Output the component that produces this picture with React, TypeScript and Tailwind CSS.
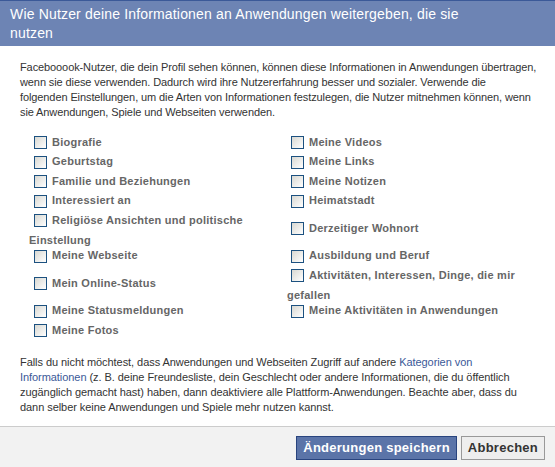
import React from "react";

type Item = { lines: string[] };

const LEFT_ROWS: (Item | null)[] = [
  { lines: ["Biografie"] },
  { lines: ["Geburtstag"] },
  { lines: ["Familie und Beziehungen"] },
  { lines: ["Interessiert an"] },
  { lines: ["Religiöse Ansichten und politische", "Einstellung"] },
  { lines: ["Meine Webseite"] },
  { lines: ["Mein Online-Status"] },
  { lines: ["Meine Statusmeldungen"] },
  { lines: ["Meine Fotos"] },
];

const RIGHT_ROWS: (Item | null)[] = [
  { lines: ["Meine Videos"] },
  { lines: ["Meine Links"] },
  { lines: ["Meine Notizen"] },
  { lines: ["Heimatstadt"] },
  { lines: ["Derzeitiger Wohnort"] },
  { lines: ["Ausbildung und Beruf"] },
  { lines: ["Aktivitäten, Interessen, Dinge, die mir", "gefallen"] },
  { lines: ["Meine Aktivitäten in Anwendungen"] },
  null,
];

const CheckBox = () => (
  <span className="mt-[2px] inline-block h-[13px] w-[13px] shrink-0 border border-[#1c5180] bg-gradient-to-br from-[#d8d8d2] to-white" />
);

const Option = ({ item, indent }: { item: Item | null; indent: string }) => {
  if (!item) return <div />;
  const [first, second] = item.lines;
  return (
    <div className="text-[11px] font-bold tracking-[0.25px] text-[#666]">
      <div className={`flex h-[19.5px] items-center whitespace-nowrap ${indent}`}>
        <CheckBox />
        <span className="ml-[5px] leading-[14px]">{first}</span>
      </div>
      {second && (
        <div className="h-[16px] whitespace-nowrap pt-[3px] leading-[14px]">
          {second}
        </div>
      )}
    </div>
  );
};

export default function App() {
  return (
    <div
      className="flex h-[467px] w-[555px] flex-col bg-white text-[#333]"
      style={{ fontFamily: '"Liberation Sans", Arial, sans-serif' }}
    >
      {/* Title bar */}
      <div className="h-[46px] border-t border-[#3b5998] bg-[#6d84b4] px-[10px] pt-[4px] text-[14px] leading-[19px] tracking-[0.17px] text-white">
        Wie Nutzer deine Informationen an Anwendungen weitergeben, die sie
        <br />
        nutzen
      </div>

      {/* Intro */}
      <p className="mt-[14px] px-[20px] text-[11px] leading-[15px] tracking-[-0.1px] whitespace-nowrap">
        Facebooook-Nutzer, die dein Profil sehen können, können diese Informationen in Anwendungen übertragen,
        <br />
        wenn sie diese verwenden. Dadurch wird ihre Nutzererfahrung besser und sozialer. Verwende die
        <br />
        folgenden Einstellungen, um die Arten von Informationen festzulegen, die Nutzer mitnehmen können, wenn
        <br />
        sie Anwendungen, Spiele und Webseiten verwenden.
      </p>

      {/* Options */}
      <div className="mt-[12px] grid grid-cols-[258px_1fr] items-center pl-[29px]">
        {LEFT_ROWS.map((left, i) => (
          <React.Fragment key={i}>
            <Option item={left} indent="pl-[5px]" />
            <Option item={RIGHT_ROWS[i]} indent="pl-[4px]" />
          </React.Fragment>
        ))}
      </div>

      {/* Note */}
      <p className="mt-[15px] px-[20px] text-[11px] leading-[15px] tracking-[-0.06px] whitespace-nowrap">
        Falls du nicht möchtest, dass Anwendungen und Webseiten Zugriff auf andere{" "}
        <a href="#" className="text-[#3b5998]">
          Kategorien von
          <br />
          Informationen
        </a>{" "}
        (z. B. deine Freundesliste, dein Geschlecht oder andere Informationen, die du öffentlich
        <br />
        zugänglich gemacht hast) haben, dann deaktiviere alle Plattform-Anwendungen. Beachte aber, dass du
        <br />
        dann selber keine Anwendungen und Spiele mehr nutzen kannst.
      </p>

      {/* Footer */}
      <div className="mt-auto flex h-[41px] items-center justify-end gap-[4px] border-t border-[#ccc] bg-[#f2f2f2] pr-[10px] pt-[1px]">
        <button className="h-[24px] border border-[#29447e] bg-[#5b74a8] px-[6px] text-[13px] font-bold tracking-[0.25px] text-white">
          Änderungen speichern
        </button>
        <button className="h-[24px] border border-[#999] bg-[#eee] px-[6px] text-[13px] font-bold tracking-[0.25px] text-[#333]">
          Abbrechen
        </button>
      </div>
    </div>
  );
}
